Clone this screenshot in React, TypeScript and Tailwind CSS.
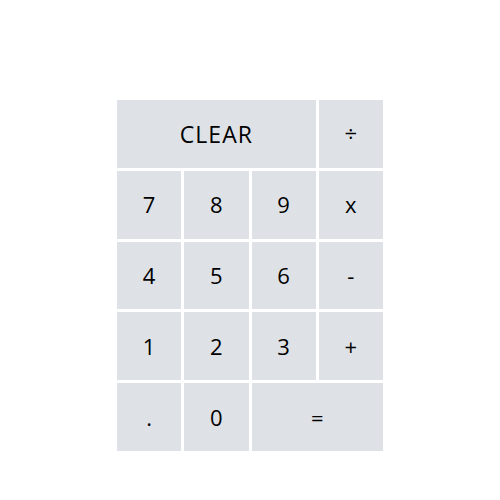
import React from "react";

const cell =
  "bg-[#dee2e7] flex items-center justify-center text-black text-[22px]";

export default function App() {
  return (
    <div className="w-[500px] h-[500px] bg-white pt-[100px] flex justify-center" style={{ fontFamily: '"Open Sans", "Noto Sans", sans-serif' }}>
      <div className="w-[266px] h-[351px] grid grid-cols-4 grid-rows-5 gap-[3px]">
        <div className={`${cell} col-span-3 text-[23px] tracking-[1px]`}>CLEAR</div>
        <div className={cell}>÷</div>
        <div className={cell}>7</div>
        <div className={cell}>8</div>
        <div className={cell}>9</div>
        <div className={cell}>x</div>
        <div className={cell}>4</div>
        <div className={cell}>5</div>
        <div className={cell}>6</div>
        <div className={cell}>-</div>
        <div className={cell}>1</div>
        <div className={cell}>2</div>
        <div className={cell}>3</div>
        <div className={cell}>+</div>
        <div className={cell}>.</div>
        <div className={cell}>0</div>
        <div className={`${cell} col-span-2`}>=</div>
      </div>
    </div>
  );
}
